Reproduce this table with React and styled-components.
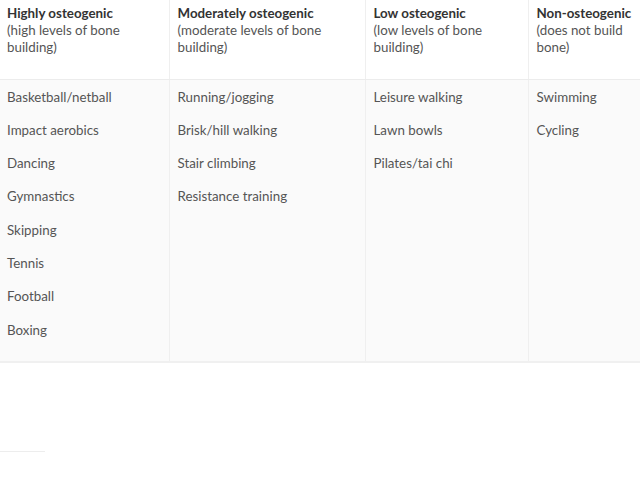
import React from 'react';
import styled, { createGlobalStyle } from 'styled-components';

const GlobalStyle = createGlobalStyle`
  body {
    margin: 0;
    background: #fff;
    font-family: Lato, "Open Sans", sans-serif;
    color: #4a4a4a;
  }
`;

const Page = styled.div`
  width: 640px;
  overflow: hidden;
`;

const Table = styled.table`
  border-collapse: collapse;
  width: 660px;
  table-layout: fixed;
  font-size: 13.33px;
  line-height: 17px;
`;

const HeadCell = styled.th`
  box-sizing: border-box;
  width: ${(p) => p.$w}px;
  text-align: left;
  vertical-align: top;
  font-weight: normal;
  padding: 5px 12px 7px 8px;
  height: 79px;
  border-right: 1px solid #efefef;
  border-bottom: 1px solid #ececec;
  color: #555;
  &:first-child {
    padding-left: 7px;
  }
  &:last-child {
    border-right: none;
  }
`;

const Title = styled.strong`
  display: block;
  font-weight: 700;
  color: #333;
`;

const BodyCell = styled.td`
  vertical-align: top;
  background: #fafafa;
  padding: 9px 8px 6px 8px;
  border-right: 1px solid #efefef;
  border-bottom: 2px solid #f0f0f0;
  &:first-child {
    padding-left: 7px;
  }
  &:last-child {
    border-right: none;
  }
`;

const Item = styled.p`
  margin: 0 0 16.33px;
  color: #555;
`;

const Rule = styled.hr`
  width: 45px;
  margin: 88px 0 0;
  border: none;
  border-top: 1px solid #ededed;
`;

const columns = [
  {
    w: 169,
    title: 'Highly osteogenic',
    note: '(high levels of bone building)',
    items: ['Basketball/netball', 'Impact aerobics', 'Dancing', 'Gymnastics', 'Skipping', 'Tennis', 'Football', 'Boxing'],
  },
  {
    w: 196,
    title: 'Moderately osteogenic',
    note: '(moderate levels of bone building)',
    items: ['Running/jogging', 'Brisk/hill walking', 'Stair climbing', 'Resistance training'],
  },
  {
    w: 163,
    title: 'Low osteogenic',
    note: '(low levels of bone building)',
    items: ['Leisure walking', 'Lawn bowls', 'Pilates/tai chi'],
  },
  {
    w: 132,
    title: 'Non-osteogenic',
    note: '(does not build bone)',
    items: ['Swimming', 'Cycling'],
  },
];

export default function App() {
  return (
    <Page>
      <GlobalStyle />
      <Table>
        <thead>
          <tr>
            {columns.map((c) => (
              <HeadCell key={c.title} $w={c.w}>
                <Title>{c.title}</Title>
                {c.note}
              </HeadCell>
            ))}
          </tr>
        </thead>
        <tbody>
          <tr>
            {columns.map((c) => (
              <BodyCell key={c.title}>
                {c.items.map((it) => (
                  <Item key={it}>{it}</Item>
                ))}
              </BodyCell>
            ))}
          </tr>
        </tbody>
      </Table>
      <Rule />
    </Page>
  );
}
